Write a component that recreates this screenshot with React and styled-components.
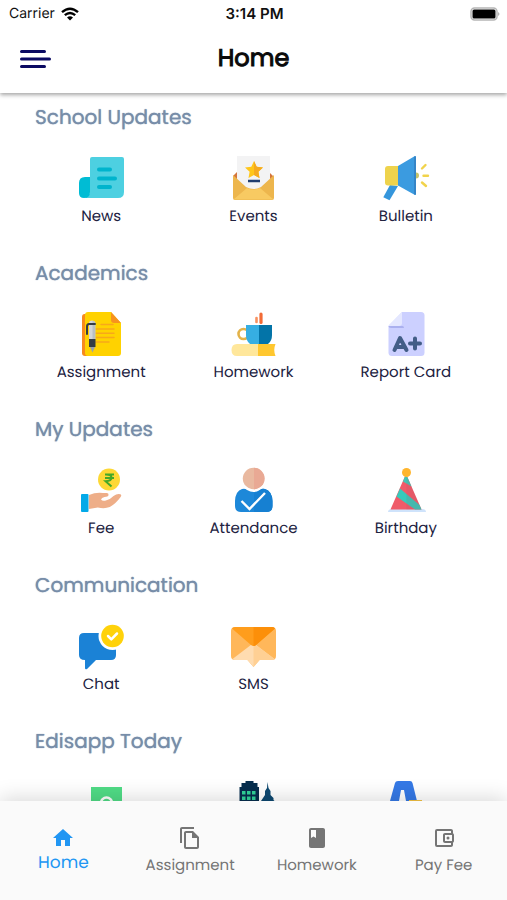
import React from "react";
import styled, { createGlobalStyle } from "styled-components";
import {
  MdHome,
  MdOutlineFileCopy,
  MdBook,
  MdOutlineAccountBalanceWallet,
} from "react-icons/md";

const GlobalStyle = createGlobalStyle`
  *, *::before, *::after { box-sizing: border-box; }
  body {
    margin: 0;
    background: #fff;
    font-family: Poppins, Inter, "Open Sans", sans-serif;
    text-rendering: geometricPrecision;
  }
`;

const Screen = styled.div`
  display: flex;
  flex-direction: column;
  height: 100vh;
  background: #fff;
`;

const TopArea = styled.header`
  flex: none;
  z-index: 1;
  background: #fff;
  box-shadow: 0 2px 4px rgba(0, 0, 0, 0.35);
`;

const Columns = styled.div`
  display: grid;
  grid-template-columns: 1fr auto 1fr;
  align-items: center;
`;

const StatusBar = styled(Columns)`
  height: 28px;
  padding: 0 7px 0 9px;
  font-family: Inter, sans-serif;
  font-size: 14px;
  line-height: 20px;
  color: #111;
`;

const Carrier = styled.div`
  display: flex;
  align-items: center;
  gap: 6px;
`;

const Clock = styled.time`
  font-size: 15px;
  font-weight: 600;
`;

const Battery = styled.svg`
  justify-self: end;
`;

const TitleBar = styled(Columns)`
  height: 65px;
  padding: 0 20px 3px;
`;

const MenuButton = styled.button`
  display: flex;
  justify-self: start;
  padding: 0;
  border: 0;
  background: none;
  cursor: pointer;
`;

const Title = styled.h1`
  margin: 0;
  font-size: 24px;
  font-weight: 400;
  line-height: 32px;
  color: #0a0a0a;
  -webkit-text-stroke: 1px currentColor;
`;

const Content = styled.main`
  flex: 1;
  min-height: 0;
  overflow-y: auto;
  scrollbar-width: none;
`;

const Section = styled.section`
  padding: 9px 25px 22px;
`;

const SectionTitle = styled.h2`
  margin: 0 10px 23px;
  font-size: 20px;
  font-weight: 400;
  line-height: 30px;
  color: #778da9;
  text-shadow: 0 0 1px currentColor;
`;

const Tiles = styled.div`
  display: grid;
  grid-template-columns: repeat(3, 1fr);
`;

const Tile = styled.button`
  display: flex;
  flex-direction: column;
  align-items: center;
  gap: 4px;
  min-height: 72px;
  padding: 0;
  border: 0;
  background: none;
  font: inherit;
  font-size: 15px;
  line-height: 20px;
  text-rendering: inherit;
  color: #22223f;
  cursor: pointer;
`;

const Glyph = styled.svg`
  flex: none;
  width: 48px;
  height: 48px;
`;

const BottomNav = styled.nav`
  flex: none;
  z-index: 1;
  display: grid;
  grid-template-columns: repeat(4, 1fr);
  height: 99px;
  padding-top: 25px;
  background: #fafafa;
  box-shadow: 0 -2px 20px rgba(0, 0, 0, 0.16);
`;

const NavLink = styled.a`
  display: flex;
  flex-direction: column;
  align-items: center;
  gap: ${(p) => (p.$active ? 0 : 4)}px;
  font-size: ${(p) => (p.$active ? 17 : 15)}px;
  line-height: 24px;
  color: ${(p) => (p.$active ? "#2196f3" : "#757575")};
  text-decoration: none;
`;

const icons = {
  news: (
    <>
      <path d="M15 2h30q2 0 2 2v33q0 6-6 6H8l5-5V4q0-2 2-2z" fill="#4dd0e1" />
      <path d="M13 22H8q-6 0-6 6v10q0 5 5 5 6 0 6-6z" fill="#00bcd4" />
      <path d="M22 14.500h11M22 23.500h16M22 32h11" stroke="#00b4cd" strokeWidth="4" strokeLinecap="round" />
    </>
  ),
  events: (
    <>
      <path d="M8 17l-4 4v4h40v-4l-4-4z" fill="#d4763c" />
      <path d="M8 1h33v30L29 38h-9L8 31z" fill="#f3f3f4" />
      <path d="M4 20l13 12q8 4 15 0l13-12v23q0 2-2 2H6q-2 0-2-2z" fill="#edb64d" />
      <path d="M4.500 44.500L18 33q7 3 13 0l13.500 11.500z" fill="#f8ca62" />
      <path d="M25 6l2.700 5.700 6.300.8-4.600 4.300L30.500 23 25 20l-5.500 3 1.100-6.200L16 12.500l6.300-.8z" fill="#ffc61a" />
      <path d="M25 6l2.700 5.700 6.300.8-4.600 4.300L30.500 23 25 20z" fill="#f5aa20" />
      <path d="M19 26h12" stroke="#1f3d70" strokeWidth="2.500" />
    </>
  ),
  bulletin: (
    <>
      <circle cx="34" cy="20.500" r="3" fill="#c7c46a" />
      <path d="M8 30L1.300 42.300l6.200 3L16 31z" fill="#3596dc" />
      <path d="M6 11h11v19.500H6q-3 0-3-3V14q0-3 3-3z" fill="#eed34c" />
      <path d="M16 11L32.500 1.300Q34 .5 34 2v37q0 1.500-1.500.7L16 30.500z" fill="#3b9be0" />
      <path d="M33 1.500v38" stroke="#3484c6" strokeWidth="2" />
      <path d="M40 13.500l3.500-3.500M41.500 20.700H46M40 27.500l4 3.500" stroke="#f1d34b" strokeWidth="2.400" strokeLinecap="round" />
    </>
  ),
  assignment: (
    <>
      <path d="M9 3H7.500Q5 3 5 6v36q0 3 3 3h5z" fill="#f78a1d" />
      <path d="M11 1h23l10 11v30q0 3-3 3H11q-3 0-3-3V4q0-3 3-3z" fill="#ffd200" />
      <path d="M34 1l10 11H37q-3 0-3-3z" fill="#f7931e" />
      <path d="M24 13.500h12M19 18h18M19 22.200h18M19 26.500h18M19 31h13" stroke="#f8a81a" strokeWidth="1.500" strokeLinecap="round" />
      <path d="M12 12q0-2.500 3-2.500t3.300 2.500v16H12z" fill="#d3d6d9" />
      <path d="M15.500 10v18h2.800V12q0-2-2.800-2z" fill="#b9bfc4" />
      <path d="M12 28h6.500v8H12z" fill="#343c44" />
      <path d="M13 36h5l-2.500 5.500z" fill="#9aa1a8" />
      <path d="M18 13h-6q-2 0-2 2.500V23" fill="none" stroke="#343c44" strokeWidth="2" strokeLinecap="round" />
    </>
  ),
  homework: (
    <>
      <circle cx="14.500" cy="23" r="5" fill="none" stroke="#e3b34a" strokeWidth="2.600" />
      <path d="M17 14h13v19H21q-4-3-4-9z" fill="#36aee2" />
      <path d="M30 14h13v10q0 6-4 9h-9z" fill="#0374a8" />
      <path d="M27.500 7v4" stroke="#f8915f" strokeWidth="2.600" strokeLinecap="round" />
      <path d="M32 3v8.500" stroke="#f26b36" strokeWidth="3.200" strokeLinecap="round" />
      <path d="M8 33h22v12H8q-5.500 0-5.500-6T8 33z" fill="#ffe79b" />
      <path d="M29 33h17.500q-2.500 6 0 12H29z" fill="#ffc72f" />
    </>
  ),
  report: (
    <>
      <path d="M20 1h19q3.500 0 3.500 3.500v37q0 3.500-3.500 3.500H10q-3.500 0-3.500-3.500V15z" fill="#ccd0ff" />
      <path d="M8 15h12.500q1.500 0 1.500 2H9q-2.500 0-2.500-2z" fill="#aab0ef" />
      <path d="M20 1L6.500 14.500Q7 15 9 15h8q3 0 3-3z" fill="#e4e7ff" />
      <path d="M12.500 39L18 27l6.500 12M14.500 36h8M33 27.500v10M28 32.500h10" fill="none" stroke="#425d87" strokeWidth="4" strokeLinecap="round" strokeLinejoin="round" />
    </>
  ),
  fee: (
    <>
      <circle cx="32" cy="12.500" r="11" fill="#fdd835" />
      <path d="M28 7.500h9M28 11h9M29 7.500q5.500 0 5.500 3.200t-6 3.500l6 5.300" fill="none" stroke="#43a829" strokeWidth="2" />
      <path d="M12 28q7-3 14-2h4q2 .5 1.500 2.300-.5 1.700-4 1.700-3 .5-3.500 2.500 1.500 2 5.500.7 4-1 7-4.200 4-3 7-1.700 1.500.7.300 2.500-5 7-11 10.200-5 2-12 .5l-9 1.500z" fill="#eeae88" />
      <rect x="4" y="27" width="7.500" height="18" rx="1" fill="#03a9e8" />
    </>
  ),
  attendance: (
    <>
      <circle cx="24.500" cy="11.500" r="10.700" fill="#e9b9a0" />
      <path d="M25 .8a10.700 10.700 0 0 1 0 21.400z" fill="#e9a994" />
      <path d="M13 22q3-1 5 1 6.500 4 13 0 2-2 5-1 7 2 7.500 12v5q0 6-6 6H12q-6 0-6-6v-5q.5-10 7-12z" fill="#1d88d9" />
      <path d="M25 26q3-.5 6-3 2-2 5-1 7 2 7.500 12v5q0 6-6 6H25z" fill="#1680d2" />
      <path d="M12.500 34l8 8L36 26" fill="none" stroke="#fff" strokeWidth="2.400" />
    </>
  ),
  birthday: (
    <>
      <path d="M6 45q0-3 4-3h30q4 0 4 3z" fill="#cfe3fb" />
      <path d="M24 7l15.500 35.500h-31z" fill="#ef5b69" />
      <path d="M24 7l5.500 12.500-8.500-5z" fill="#3ec8b8" />
      <path d="M18 21.500l19.500 16.500 2 4.500H33L14.500 29.500z" fill="#36cabb" />
      <path d="M24.500 8L39.500 42.500H24.500z" fill="#a5505b" opacity="0.140" />
      <circle cx="24.500" cy="5.500" r="4.500" fill="#ffb52d" />
    </>
  ),
  chat: (
    <>
      <path d="M7 10h27q5 0 5 5v17q0 5-5 5H19L10 46q-2 1-2-1v-8q-6 0-6-5V15q0-5 5-5z" fill="#1b82d6" />
      <circle cx="35.500" cy="13" r="14" fill="#fff" />
      <circle cx="35.500" cy="13" r="11.300" fill="#ffd20a" />
      <path d="M31 13l3.300 3.300L40 10.500" fill="none" stroke="#fff" strokeWidth="2.500" strokeLinecap="round" strokeLinejoin="round" />
    </>
  ),
  sms: (
    <>
      <path d="M6 4h37q4 0 4 4v25q0 4-4 4H30.500l-6 7-6-7H6q-4 0-4-4V8q0-4 4-4z" fill="#ffb75a" />
      <path d="M3.500 36L24.500 20l21 16q-1 1-2.500 1H30.500l-6 7-6-7H6q-1.500 0-2.500-1z" fill="#ffdcb0" />
      <path d="M24.500 20l21 16q-1 1-2.500 1H30.500l-6 7z" fill="#ffd094" />
      <path d="M3 5.500Q4 4 6 4h37q2 0 3 1.500L27 22q-2.500 2-5 0z" fill="#ff9d1c" />
      <path d="M24.500 4H43q2 0 3 1.500L27 22q-1 1-2.500 1z" fill="#fc8f09" />
    </>
  ),
  note: (
    <>
      <rect x="14" y="8" width="31" height="38" fill="#50dc86" />
      <circle cx="29.500" cy="24" r="5.500" fill="none" stroke="#fff" strokeWidth="2.500" />
    </>
  ),
  city: (
    <>
      <path d="M10.500 8h2V4h4V2h8v2h4v4h1.500v38H10.500z" fill="#072e4e" />
      <path d="M13 12h3.500v3.500H13zM18 12h3.500v3.500H18zM23 12h3.500v3.500H23zM13 17.500h3.500V21H13zM18 17.500h3.500V21H18zM23 17.500h3.500V21H23z" fill="#30d49a" />
      <path d="M38.500 3l1 6 2 3v4l3 3v2l1 1v24H32V22l2-3 2-3v-4l2-3z" fill="#0d4870" />
    </>
  ),
  letter: (
    <>
      <path d="M16 2h12q2 0 2.500 2L35 22H24l-2-11h-3l-2 11H8l5-18q.5-2 3-2z" fill="#3579e6" />
      <path d="M27 21h13v4H27z" fill="#f6c342" />
    </>
  ),
};

const sections = [
  { title: "School Updates", items: [["news", "News"], ["events", "Events"], ["bulletin", "Bulletin"]] },
  { title: "Academics", items: [["assignment", "Assignment"], ["homework", "Homework"], ["report", "Report Card"]] },
  { title: "My Updates", items: [["fee", "Fee"], ["attendance", "Attendance"], ["birthday", "Birthday"]] },
  { title: "Communication", items: [["chat", "Chat"], ["sms", "SMS"]] },
  { title: "Edisapp Today", items: [["note"], ["city"], ["letter"]] },
];

const navItems = [
  { label: "Home", Icon: MdHome, active: true },
  { label: "Assignment", Icon: MdOutlineFileCopy },
  { label: "Homework", Icon: MdBook },
  { label: "Pay Fee", Icon: MdOutlineAccountBalanceWallet },
];

export default function App() {
  return (
    <Screen>
      <GlobalStyle />
      <TopArea>
        <StatusBar>
          <Carrier>
            Carrier
            <svg width="18" height="14" viewBox="0 0 18 14" fill="none" stroke="#000" strokeWidth="2.400">
              <path d="M1 5.200q8-7 16 0M3.800 8.200q5.200-4.400 10.400 0" />
              <path d="M6 10.500q3-2.400 6 0L9 13.500z" fill="#000" stroke="none" />
            </svg>
          </Carrier>
          <Clock>3:14 PM</Clock>
          <Battery width="30" height="14" viewBox="0 0 30 14">
            <rect x="1" y="1" width="26" height="12" rx="3.500" fill="#fff" stroke="#b5b5b5" strokeWidth="1.500" />
            <rect x="2.500" y="2.500" width="23" height="9" rx="1.500" fill="#000" />
            <path d="M28 5q3 2 0 4z" fill="#b5b5b5" />
          </Battery>
        </StatusBar>
        <TitleBar>
          <MenuButton aria-label="Menu">
            <svg width="31" height="20" viewBox="0 0 31 20" stroke="#0b0a62" strokeWidth="3" strokeLinecap="round">
              <path d="M1.500 2.500h23M1.500 10h28M1.500 17.500h23" />
            </svg>
          </MenuButton>
          <Title>Home</Title>
        </TitleBar>
      </TopArea>
      <Content>
        {sections.map(({ title, items }) => (
          <Section key={title}>
            <SectionTitle>{title}</SectionTitle>
            <Tiles>
              {items.map(([icon, label]) => (
                <Tile key={icon} aria-label={label ? undefined : icon}>
                  <Glyph viewBox="0 0 48 48" aria-hidden="true">{icons[icon]}</Glyph>
                  {label}
                </Tile>
              ))}
            </Tiles>
          </Section>
        ))}
      </Content>
      <BottomNav>
        {navItems.map(({ label, Icon, active }) => (
          <NavLink key={label} href="#" $active={active} aria-current={active ? "page" : undefined}>
            <Icon size={24} />
            {label}
          </NavLink>
        ))}
      </BottomNav>
    </Screen>
  );
}
